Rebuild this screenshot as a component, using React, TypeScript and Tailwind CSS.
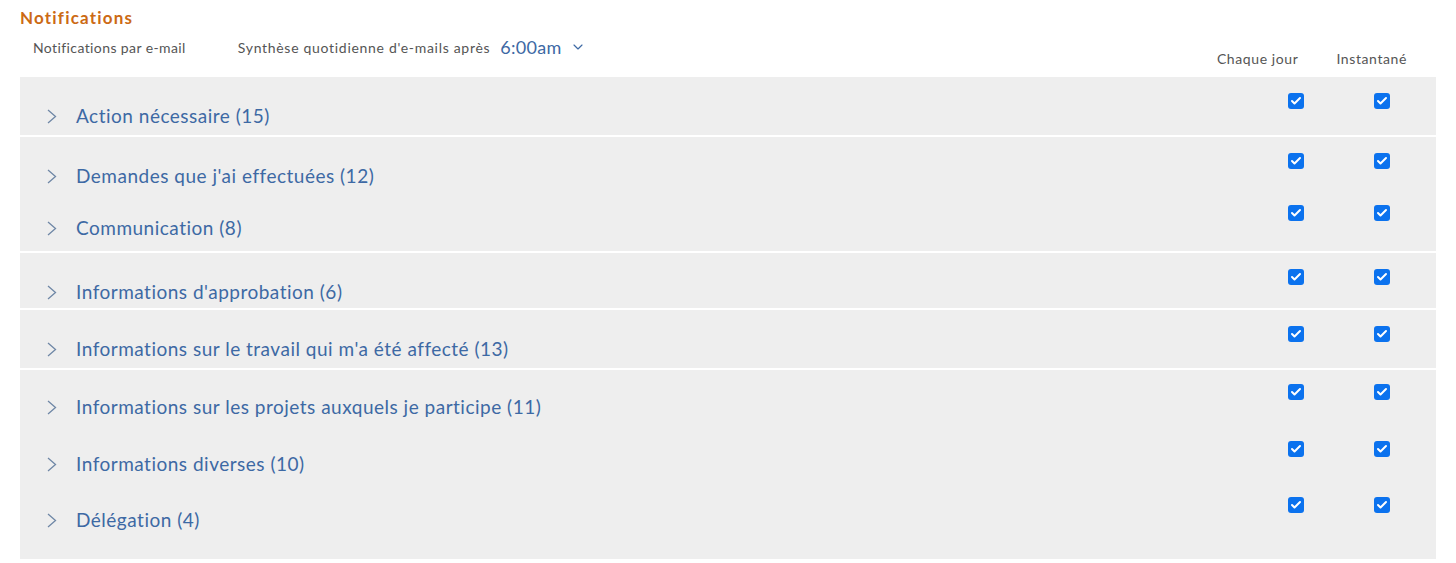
import { Check, ChevronDown } from "lucide-react";

type Row = { label: string; h: number; off?: number };

const groups: Row[][] = [
  [{ label: "Action nécessaire (15)", h: 58 }],
  [
    { label: "Demandes que j'ai effectuées (12)", h: 52 },
    { label: "Communication (8)", h: 62 },
  ],
  [{ label: "Informations d'approbation (6)", h: 55 }],
  [{ label: "Informations sur le travail qui m'a été affecté (13)", h: 58 }],
  [
    { label: "Informations sur les projets auxquels je participe (11)", h: 56, off: -2 },
    { label: "Informations diverses (10)", h: 56, off: -1 },
    { label: "Délégation (4)", h: 77, off: -1 },
  ],
];

function Box() {
  return (
    <div className="w-4 h-4 rounded-[3px] bg-[#0b72ee] flex items-center justify-center">
      <Check className="w-3 h-3 text-white" strokeWidth={4} />
    </div>
  );
}

function NotifRow({ row }: { row: Row }) {
  return (
    <div className="flex" style={{ height: row.h, marginTop: row.off ?? 0, marginBottom: -(row.off ?? 0) }}>
      <div className="flex-1 flex items-start pt-[28px] pl-[27px]">
        <svg width="10" height="15" viewBox="0 0 10 15" className="mt-[4px]" fill="none">
          <path d="M1 1 L8.5 7.5 L1 14" stroke="#6f87a6" strokeWidth="1.3" />
        </svg>
        <span className="ml-[19px] text-[19px] tracking-[0.5px] leading-[22px] text-[#3d69a4]">
          {row.label}
        </span>
      </div>
      <div className="w-[86px] flex justify-center pt-[16px]">
        <Box />
      </div>
      <div className="w-[86px] flex justify-center pt-[16px] mr-[11px]">
        <Box />
      </div>
    </div>
  );
}

export default function App() {
  return (
    <div className="bg-white w-[1456px] h-[563px] font-['Lato','Liberation_Sans',sans-serif]">
      <div className="px-[20px] pt-[8px]">
        <div className="text-[17px] font-bold tracking-[1.2px] text-[#cc6a14] leading-[20px]">
          Notifications
        </div>
        <div className="flex items-start">
          <div className="flex items-center h-[26px] mt-[6px] pl-[13px] text-[14px] tracking-[0.4px] text-[#555]">
            <span>Notifications par e-mail</span>
            <span className="ml-[52px] tracking-[0.7px]">Synthèse quotidienne d'e-mails après</span>
            <span className="ml-[10px] text-[18px] tracking-[0.3px] text-[#3d69a4]">6:00am</span>
            <ChevronDown className="ml-[8px] w-[16px] h-[16px] text-[#3d69a4]" strokeWidth={1.75} />
          </div>
          <div className="flex-1" />
          <div className="flex gap-[38px] mr-[29px] pt-[21px] text-[14px] tracking-[0.6px] text-[#555] leading-[20px]">
            <div>Chaque jour</div>
            <div>Instantané</div>
          </div>
        </div>
        <div className="mt-[8px] flex flex-col gap-[2px]">
          {groups.map((g, i) => (
            <div key={i} className="bg-[#eeeeee]">
              {g.map((r) => (
                <NotifRow key={r.label} row={r} />
              ))}
            </div>
          ))}
        </div>
      </div>
    </div>
  );
}
